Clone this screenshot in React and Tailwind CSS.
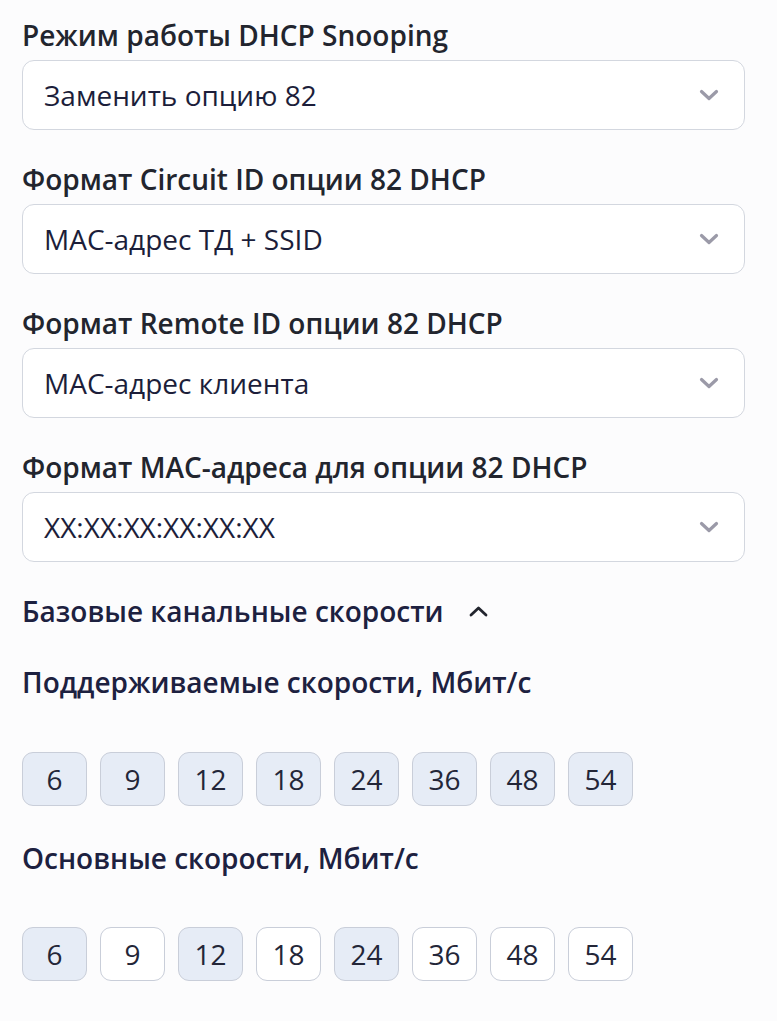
import React from "react";

const font = { fontFamily: '"Open Sans", "Noto Sans", sans-serif' };

function ChevronDown() {
  return (
    <svg width="20" height="12" viewBox="0 0 20 12" fill="none">
      <path d="M2.5 2.5 L10 9.5 L17.5 2.5" stroke="#9b9aa8" strokeWidth="3.2" strokeLinecap="round" strokeLinejoin="round" />
    </svg>
  );
}

function ChevronUp() {
  return (
    <svg width="19" height="11" viewBox="0 0 19 11" fill="none">
      <path d="M2 9 L9.5 2 L17 9" stroke="#22252e" strokeWidth="2.8" strokeLinecap="round" strokeLinejoin="round" />
    </svg>
  );
}

function Field({ label, value, first }) {
  return (
    <div className={first ? "" : "mt-[31px]"}>
      <div className="text-[28px] leading-[36px] font-semibold text-[#22252e]">{label}</div>
      <div className="mt-[7px] h-[70px] rounded-[12px] border-[1.5px] border-[#d3d7df] bg-white flex items-center justify-between pl-[21px] pr-[25px]">
        <span className="text-[28px] leading-[36px] text-[#1c1e3a]">{value}</span>
        <ChevronDown />
      </div>
    </div>
  );
}

function Chips({ selected }) {
  const vals = [6, 9, 12, 18, 24, 36, 48, 54];
  return (
    <div className="flex gap-[13px]">
      {vals.map((v) => (
        <div
          key={v}
          className={
            "w-[65px] h-[54px] rounded-[11px] border-[1.5px] border-[#c9ced9] flex items-center justify-center text-[28px] leading-[36px] text-[#232638] " +
            (selected.includes(v) ? "bg-[#e6ecf6]" : "bg-white")
          }
        >
          {v}
        </div>
      ))}
    </div>
  );
}

export default function App() {
  return (
    <div className="min-h-screen bg-[#fcfcfd] pl-[22px] pr-[32px] pt-[17px]" style={font}>
      <Field first label="Режим работы DHCP Snooping" value="Заменить опцию 82" />
      <Field label="Формат Circuit ID опции 82 DHCP" value="MAC-адрес ТД + SSID" />
      <Field label="Формат Remote ID опции 82 DHCP" value="MAC-адрес клиента" />
      <Field label="Формат MAC-адреса для опции 82 DHCP" value="XX:XX:XX:XX:XX:XX" />

      <div className="mt-[31px] flex items-center gap-[25px]">
        <span className="text-[28px] leading-[36px] font-semibold text-[#1d2140]">Базовые канальные скорости</span>
        <ChevronUp />
      </div>

      <div className="mt-[35px] text-[28px] leading-[36px] font-semibold text-[#1d2140]">
        Поддерживаемые скорости, Мбит/с
      </div>
      <div className="mt-[52px]">
        <Chips selected={[6, 9, 12, 18, 24, 36, 48, 54]} />
      </div>

      <div className="mt-[34px] text-[28px] leading-[36px] font-semibold text-[#1d2140]">
        Основные скорости, Мбит/с
      </div>
      <div className="mt-[51px]">
        <Chips selected={[6, 12, 24]} />
      </div>
    </div>
  );
}
